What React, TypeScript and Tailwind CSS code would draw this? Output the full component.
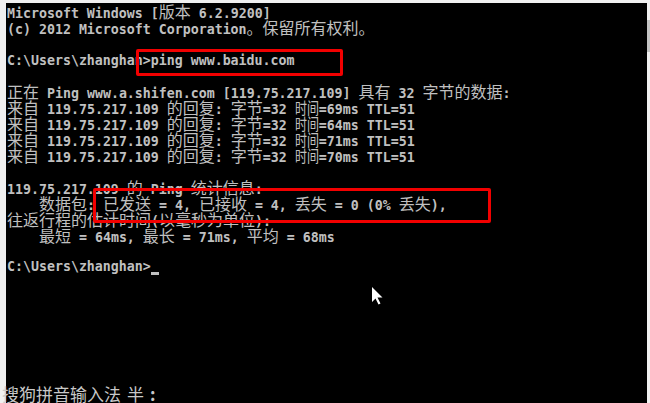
import React from 'react';

// console screen grid: 8x16 cells, CJK takes two cells
const CJK = /([\u3000-\u303f\u3400-\u9fff\uff00-\uffef]+)/;

const lines: string[] = [
  'Microsoft Windows [版本 6.2.9200]',
  '(c) 2012 Microsoft Corporation。保留所有权利。',
  '',
  'C:\\Users\\zhanghan>ping www.baidu.com',
  '',
  '正在 Ping www.a.shifen.com [119.75.217.109] 具有 32 字节的数据:',
  '来自 119.75.217.109 的回复: 字节=32 时间=69ms TTL=51',
  '来自 119.75.217.109 的回复: 字节=32 时间=64ms TTL=51',
  '来自 119.75.217.109 的回复: 字节=32 时间=71ms TTL=51',
  '来自 119.75.217.109 的回复: 字节=32 时间=70ms TTL=51',
  '',
  '119.75.217.109 的 Ping 统计信息:',
  '    数据包: 已发送 = 4, 已接收 = 4, 丢失 = 0 (0% 丢失),',
  '往返行程的估计时间(以毫秒为单位):',
  '    最短 = 64ms, 最长 = 71ms, 平均 = 68ms',
  '',
];

function ConsoleLine({ text, narrowTime }: { text: string; narrowTime?: boolean }) {
  const parts = text.split(CJK).filter((p) => p.length > 0);
  return (
    <div className="h-[16px] whitespace-pre leading-[16px]">
      {parts.map((p, i) => {
        if (CJK.test(p)) {
          if (narrowTime && p === '时间') {
            // squeezed in the screenshot: two glyphs in three cells
            return (
              <span key={i} className="inline-block h-[16px] w-[24px] align-top">
                <span className="inline-block origin-left scale-x-75 font-['Noto_Sans_CJK_SC',sans-serif] text-[16px] font-normal leading-[16px]">
                  {p}
                </span>
              </span>
            );
          }
          return (
            <span
              key={i}
              className="font-['Noto_Sans_CJK_SC',sans-serif] text-[16px] font-normal leading-[16px]"
            >
              {p}
            </span>
          );
        }
        return (
          <span
            key={i}
            className="font-['DejaVu_Sans_Mono',monospace] text-[13.28px] font-bold leading-[16px]"
          >
            {p}
          </span>
        );
      })}
    </div>
  );
}

function MouseArrow() {
  return (
    <svg
      className="absolute left-[366px] top-[284px]"
      width="12"
      height="18"
      viewBox="0 0 12 18"
    >
      <path d="M0 0 L0 15 L3.5 11.5 L6.5 17.5 L8.5 16.5 L5.5 10.5 L10.5 10.5 Z" fill="#ffffff" />
    </svg>
  );
}

export default function App() {
  return (
    <div className="flex h-[403px] w-[650px] bg-[#f0f0f0] pl-[6px] pt-[3px]">
      <div className="relative flex-1 bg-black pl-[1px] text-[#c0c0c0]">
        {lines.map((l, i) => (
          <ConsoleLine key={i} text={l} narrowTime={l.startsWith('来自')} />
        ))}
        <div className="flex h-[16px] items-start leading-[16px]">
          <span className="whitespace-pre font-['DejaVu_Sans_Mono',monospace] text-[13.28px] font-bold leading-[16px]">
            {'C:\\Users\\zhanghan>'}
          </span>
          <span className="mt-[13px] h-[3px] w-[8px] bg-[#c0c0c0]" />
        </div>
        {Array.from({ length: 7 }).map((_, i) => (
          <div key={i} className="h-[16px]" />
        ))}
        <div className="-ml-[5px] -mt-[1px] flex h-[16px] items-center gap-[6px] whitespace-pre font-['Noto_Sans_CJK_SC',sans-serif] text-[17px] leading-[16px] text-[#c8c8c8]">
          <span>搜狗拼音输入法</span>
          <span>半</span>
          <span className="font-bold">:</span>
        </div>

        {/* annotation boxes */}
        <div className="absolute left-[130px] top-[46px] h-[27px] w-[207px] rounded-[2px] border-[3px] border-[#f20000]" />
        <div className="absolute left-[87px] top-[185px] h-[35px] w-[398px] rounded-[2px] border-[3px] border-[#f20000]" />
        <MouseArrow />
      </div>
      <div className="flex w-[3px] flex-col">
        <div className="mt-[17px] h-[32px] w-full bg-[#c4c4c4]" />
      </div>
    </div>
  );
}
